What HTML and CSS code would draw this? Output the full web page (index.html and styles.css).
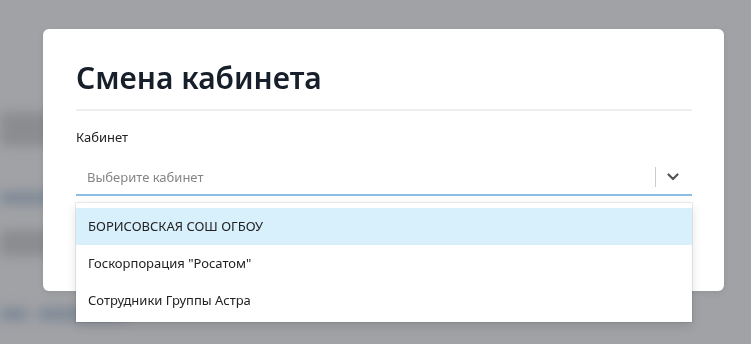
FILE: index.html
```html
<!DOCTYPE html>
<html lang="ru">
<head>
    <meta charset="UTF-8">
    <meta name="viewport" content="width=device-width, initial-scale=1.0">
    <title>Смена кабинета</title>
    <link rel="stylesheet" href="styles.css">
</head>
<body>
    <!-- blurred page behind the modal -->
    <div class="page">
        <div class="nav">
            <div class="nav-item nav-dark"></div>
            <div class="nav-item nav-blue"></div>
            <div class="nav-item nav-dark nav-tall"></div>
            <div class="nav-row">
                <div class="nav-item nav-blue nav-short"></div>
                <div class="nav-item nav-blue nav-wide"></div>
            </div>
        </div>
    </div>

    <div class="overlay">
        <div class="modal">
            <h1 class="modal-title">Смена кабинета</h1>

            <div class="field">
                <label class="field-label">Кабинет</label>
                <div class="select">
                    <div class="select-control">
                        <span class="select-placeholder">Выберите кабинет</span>
                        <span class="select-sep"></span>
                        <span class="select-arrow">
                            <svg width="12" height="8" viewBox="0 0 12 8">
                                <path d="M1.5 1.5 L6 6 L10.5 1.5" fill="none" stroke="#555" stroke-width="2.2" stroke-linecap="round" stroke-linejoin="round"/>
                            </svg>
                        </span>
                    </div>
                    <ul class="select-menu">
                        <li class="option option-active">БОРИСОВСКАЯ СОШ ОГБОУ</li>
                        <li class="option">Госкорпорация "Росатом"</li>
                        <li class="option">Сотрудники Группы Астра</li>
                    </ul>
                </div>
            </div>
        </div>
    </div>
</body>
</html>
```

FILE: styles.css
```css
* {
    margin: 0;
    padding: 0;
    box-sizing: border-box;
}

body {
    font-family: 'Noto Sans', 'Open Sans', sans-serif;
    background: #a1a2a6;
    width: 751px;
    height: 344px;
    overflow: hidden;
}

/* background page, blurred */
.page {
    filter: blur(6px);
    padding-top: 112px;
}

.nav {
    width: 140px;
    display: flex;
    flex-direction: column;
}

.nav-item {
    height: 34px;
    width: 60px;
    border-radius: 4px;
}

.nav-dark {
    background: #8b8c90;
}

.nav-blue {
    background: #7c8895;
    height: 12px;
    margin-top: 46px;
}

.nav-tall {
    margin-top: 26px;
    height: 26px;
}

.nav-row {
    display: flex;
    gap: 10px;
    margin-top: 52px;
}

.nav-short {
    width: 28px;
    margin-top: 0;
}

.nav-wide {
    width: 90px;
    margin-top: 0;
}

/* modal */
.overlay {
    position: fixed;
    inset: 0;
    padding: 29px 27px 0 43px;
}

.modal {
    background: #fff;
    border-radius: 6px;
    width: 681px;
    height: 262px;
    padding: 27px 32px 0 33px;
    box-shadow: 0 2px 6px rgba(0, 0, 0, 0.08);
}

.modal-title {
    font-size: 30px;
    font-weight: 600;
    line-height: 44px;
    color: #17202a;
    padding-bottom: 9px;
    border-bottom: 2px solid #eeeeee;
}

.field {
    margin-top: 17px;
}

.field-label {
    display: block;
    font-size: 13px;
    line-height: 18px;
    color: #222;
}

.select {
    position: relative;
    margin-top: 12px;
}

.select-control {
    height: 38px;
    display: flex;
    align-items: center;
    border-bottom: 2px solid #8dbde3;
    padding: 2px 0 0 11px;
}

.select-placeholder {
    flex: 1;
    font-size: 13px;
    color: #858585;
}

.select-sep {
    width: 1px;
    height: 20px;
    background: #cccccc;
}

.select-arrow {
    width: 36px;
    display: flex;
    justify-content: center;
    align-items: center;
    padding-right: 2px;
}

.select-menu {
    position: absolute;
    top: 45px;
    left: 0;
    right: 0;
    list-style: none;
    background: #fff;
    padding: 5px 0 3px;
    box-shadow: 0 0 0 1px rgba(0, 0, 0, 0.08), 0 4px 10px rgba(0, 0, 0, 0.12);
}

.option {
    height: 37px;
    line-height: 37px;
    padding-left: 12px;
    font-size: 13px;
    color: #222;
}

.option-active {
    background: #d8effc;
}
```
